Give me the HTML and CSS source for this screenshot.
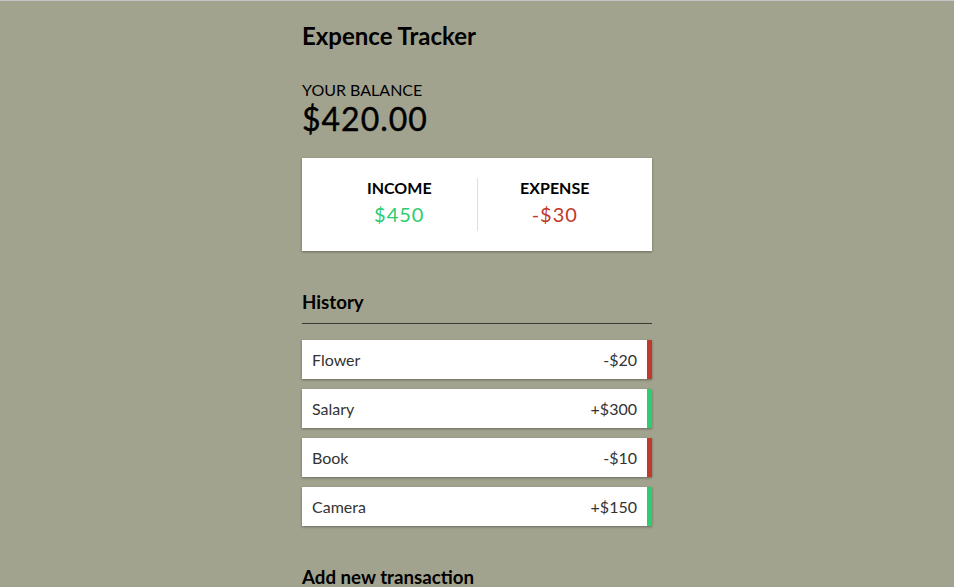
FILE: index.html
```html
<!DOCTYPE html>
<html lang="en">
<head>
<meta charset="UTF-8">
<title>Expence Tracker</title>
<link rel="stylesheet" href="styles.css">
</head>
<body>
<div class="container">
  <h2 class="title">Expence Tracker</h2>
  <h4 class="balance-label">Your Balance</h4>
  <h1 class="balance">$420.00</h1>
  <div class="inc-exp">
    <div class="inc-exp-col">
      <h4 class="label">Income</h4>
      <p class="money plus">$450</p>
    </div>
    <div class="inc-exp-col">
      <h4 class="label">Expense</h4>
      <p class="money minus">-$30</p>
    </div>
  </div>
  <h3 class="section">History</h3>
  <ul class="list">
    <li class="item minus"><span>Flower</span><span>-$20</span></li>
    <li class="item plus"><span>Salary</span><span>+$300</span></li>
    <li class="item minus"><span>Book</span><span>-$10</span></li>
    <li class="item plus"><span>Camera</span><span>+$150</span></li>
  </ul>
  <h3 class="section-plain">Add new transaction</h3>
</div>
</body>
</html>
```
FILE: styles.css
```css
html, body {
  margin: 0;
  padding: 0;
}
body {
  background-color: #a2a38e;
  border-top: 1px solid #c4c4c4;
  font-family: "Lato", "Liberation Sans", sans-serif;
  color: #000;
  height: 586px;
  overflow: hidden;
}
.container {
  width: 350px;
  margin: 0 auto;
  padding-top: 20px;
}
.title {
  margin: 0 0 30px;
  font-size: 24px;
  font-weight: 700;
}
.balance-label {
  margin: 0;
  font-size: 16px;
  font-weight: 400;
  text-transform: uppercase;
}
.balance {
  margin: 0;
  font-size: 32px;
  font-weight: 400;
  letter-spacing: 1px;
  -webkit-text-stroke: 0.4px #000;
}
.inc-exp {
  background: #fff;
  box-shadow: 0 1px 3px rgba(0,0,0,0.12), 0 1px 2px rgba(0,0,0,0.24);
  padding: 20px;
  display: flex;
  margin: 20px 0;
}
.inc-exp-col {
  flex: 1;
  text-align: center;
}
.inc-exp-col:first-child {
  border-right: 1px solid #dedede;
}
.label {
  margin: 0;
  font-size: 16px;
  font-weight: 700;
  text-transform: uppercase;
}
.money {
  font-size: 20px;
  letter-spacing: 1px;
  margin: 5px 0;
}
.money.plus { color: #2ecc71; }
.money.minus { color: #c0392b; }
.section {
  font-size: 18.72px;
  font-weight: 700;
  margin: 40px 0 10px;
  padding-bottom: 10px;
  border-bottom: 1px solid #3a3a33;
}
.section-plain {
  font-size: 18.72px;
  font-weight: 700;
  margin: 40px 0 10px;
}
.list {
  list-style: none;
  padding: 0;
  margin: 16px 0 40px;
}
.item {
  background: #fff;
  box-shadow: 0 1px 3px rgba(0,0,0,0.12), 0 1px 2px rgba(0,0,0,0.24);
  color: #333;
  display: flex;
  justify-content: space-between;
  padding: 10px;
  margin: 10px 0;
  font-size: 16px;
}
.item.plus { border-right: 5px solid #2ecc71; }
.item.minus { border-right: 5px solid #c0392b; }
```
